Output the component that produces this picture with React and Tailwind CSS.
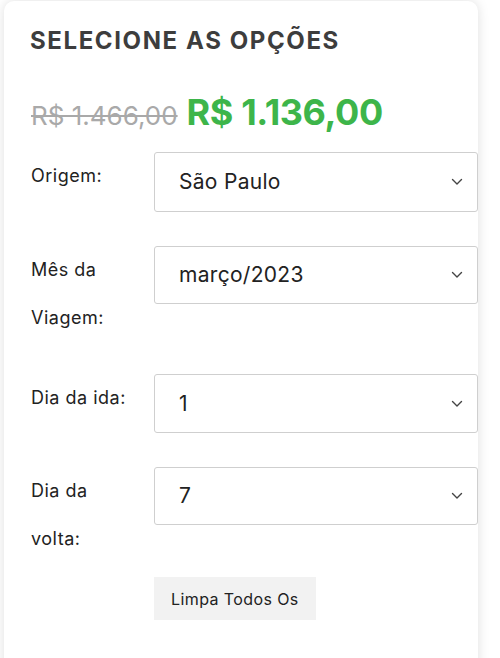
import React from "react";

const font = { fontFamily: "Inter, 'Noto Sans', sans-serif" };

function Chevron() {
  return (
    <svg width="12" height="8" viewBox="0 0 12 8" className="shrink-0">
      <path d="M1.5 1.5 L6 6 L10.5 1.5" fill="none" stroke="#444" strokeWidth="1.4" strokeLinecap="round" strokeLinejoin="round" />
    </svg>
  );
}

function Row({ label, value, h, mb }) {
  return (
    <div className={`flex items-start ${mb}`}>
      <div className="w-[123px] shrink-0 text-[18px] tracking-[0.5px] leading-[48px] text-[#222]">{label}</div>
      <div className={`flex-1 ${h} border border-[#cfcfcf] rounded-[3px] flex items-center justify-between pl-[24px] pr-[14px] text-[21px] tracking-[0.3px] text-[#222]`}>
        <span>{value}</span>
        <Chevron />
      </div>
    </div>
  );
}

export default function App() {
  return (
    <div className="w-[500px] h-[658px] bg-white overflow-hidden" style={font}>
      <div className="ml-[4px] mt-[1px] w-[474px] h-[680px] bg-white rounded-[10px] shadow-[0_0_12px_rgba(0,0,0,0.13)] pl-[27px] pt-[23px]">
        <h2 className="text-[24px] leading-[34px] font-bold text-[#3d3d3d] tracking-[1.6px] -ml-[1px]">SELECIONE AS OPÇÕES</h2>
        <div className="mt-[32px] flex items-baseline gap-[9px] leading-[44px]">
          <span className="text-[26px] text-[#a9a9a9] line-through">R$ 1.466,00</span>
          <span className="text-[36px] font-bold text-[#3db54a] tracking-[-0.4px]">R$ 1.136,00</span>
        </div>
        <div className="mt-[14px]">
          <Row label="Origem:" value="São Paulo" h="h-[60px]" mb="mb-[34px]" />
          <Row label={<>Mês da<br />Viagem:</>} value="março/2023" h="h-[58px]" mb="mb-[32px]" />
          <Row label="Dia da ida:" value="1" h="h-[59px]" mb="mb-[34px]" />
          <Row label={<>Dia da<br />volta:</>} value="7" h="h-[58px]" mb="mb-[14px]" />
          <div className="pl-[123px]">
            <button className="h-[43px] px-[17px] bg-[#f2f2f2] text-[16px] tracking-[0.4px] text-[#222]">Limpa Todos Os</button>
          </div>
        </div>
      </div>
    </div>
  );
}
